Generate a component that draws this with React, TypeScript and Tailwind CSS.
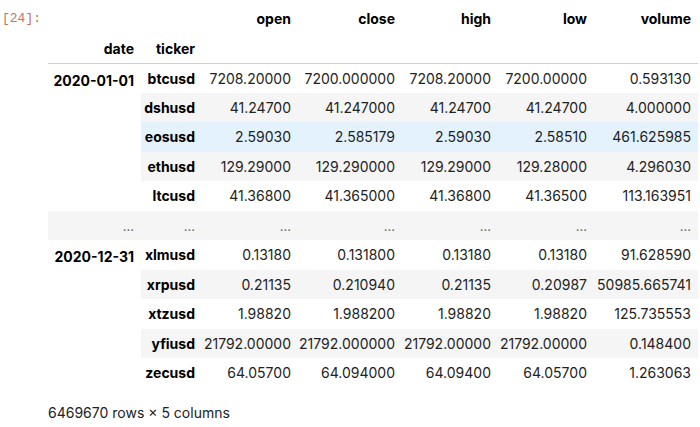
import React from 'react';

type Row = {
  date?: string;
  dateSpan?: number;
  ticker: string;
  vals: string[];
  bg: string;
  gap?: boolean;
};

const rows: Row[] = [
  { date: '2020-01-01', dateSpan: 5, ticker: 'btcusd', vals: ['7208.20000', '7200.000000', '7208.20000', '7200.00000', '0.593130'], bg: 'bg-white' },
  { ticker: 'dshusd', vals: ['41.24700', '41.247000', '41.24700', '41.24700', '4.000000'], bg: 'bg-[#f5f5f5]' },
  { ticker: 'eosusd', vals: ['2.59030', '2.585179', '2.59030', '2.58510', '461.625985'], bg: 'bg-[#e3f2fd]' },
  { ticker: 'ethusd', vals: ['129.29000', '129.290000', '129.29000', '129.28000', '4.296030'], bg: 'bg-[#f5f5f5]' },
  { ticker: 'ltcusd', vals: ['41.36800', '41.365000', '41.36800', '41.36500', '113.163951'], bg: 'bg-white' },
  { date: '...', dateSpan: 1, ticker: '...', vals: ['...', '...', '...', '...', '...'], bg: 'bg-[#f5f5f5]', gap: true },
  { date: '2020-12-31', dateSpan: 5, ticker: 'xlmusd', vals: ['0.13180', '0.131800', '0.13180', '0.13180', '91.628590'], bg: 'bg-white' },
  { ticker: 'xrpusd', vals: ['0.21135', '0.210940', '0.21135', '0.20987', '50985.665741'], bg: 'bg-[#f5f5f5]' },
  { ticker: 'xtzusd', vals: ['1.98820', '1.988200', '1.98820', '1.98820', '125.735553'], bg: 'bg-white' },
  { ticker: 'yfiusd', vals: ['21792.00000', '21792.000000', '21792.00000', '21792.00000', '0.148400'], bg: 'bg-[#f5f5f5]' },
  { ticker: 'zecusd', vals: ['64.05700', '64.094000', '64.09400', '64.05700', '1.263063'], bg: 'bg-white' },
];

const columns = ['open', 'close', 'high', 'low', 'volume'];

const Dots = () => <span className="text-[#6b6b6b] font-normal text-[13px] leading-none">...</span>;

export default function App() {
  return (
    <div className="w-[700px] h-[427px] overflow-hidden bg-white text-[#222] font-['Inter',sans-serif] text-[14px] flex">
      <div className="w-[48px] shrink-0 pl-[2px] pt-[9px] font-['Liberation_Mono',monospace] text-[13px] leading-[19px] text-[#c8735a]">
        [24]:
      </div>
      <div className="flex flex-col pt-[4px]">
        <table className="table-fixed border-collapse w-[650px]">
          <colgroup>
            <col className="w-[93px]" />
            <col className="w-[61px]" />
            <col className="w-[96px]" />
            <col className="w-[104px]" />
            <col className="w-[96px]" />
            <col className="w-[96px]" />
            <col className="w-[104px]" />
          </colgroup>
          <thead className="border-b border-[#cfcfcf]">
            <tr className="h-[29.5px]">
              <th />
              <th />
              {columns.map(c => (
                <th key={c} className="text-right pr-[7px] font-bold text-black">{c}</th>
              ))}
            </tr>
            <tr className="h-[29.5px]">
              <th className="text-right pr-[7px] font-bold text-black">date</th>
              <th className="text-right pr-[7px] font-bold text-black">ticker</th>
              <th colSpan={5} />
            </tr>
          </thead>
          <tbody>
            {rows.map((r, i) => (
              <tr key={i} className={`h-[29.5px] ${r.bg}`}>
                {r.date && (
                  <th
                    rowSpan={r.dateSpan}
                    className={`text-right pr-[7px] font-bold text-black ${r.gap ? 'bg-[#f5f5f5] align-middle' : 'bg-white align-top pt-[6px]'}`}
                  >
                    {r.gap ? <Dots /> : r.date}
                  </th>
                )}
                <th className="text-right pr-[7px] font-bold text-black">
                  {r.gap ? <Dots /> : r.ticker}
                </th>
                {r.vals.map((v, j) => (
                  <td key={j} className="text-right pr-[7px] whitespace-nowrap">
                    {r.gap ? <Dots /> : v}
                  </td>
                ))}
              </tr>
            ))}
          </tbody>
        </table>
        <p className="mt-[15px] leading-[20px]">6469670 rows × 5 columns</p>
      </div>
    </div>
  );
}
